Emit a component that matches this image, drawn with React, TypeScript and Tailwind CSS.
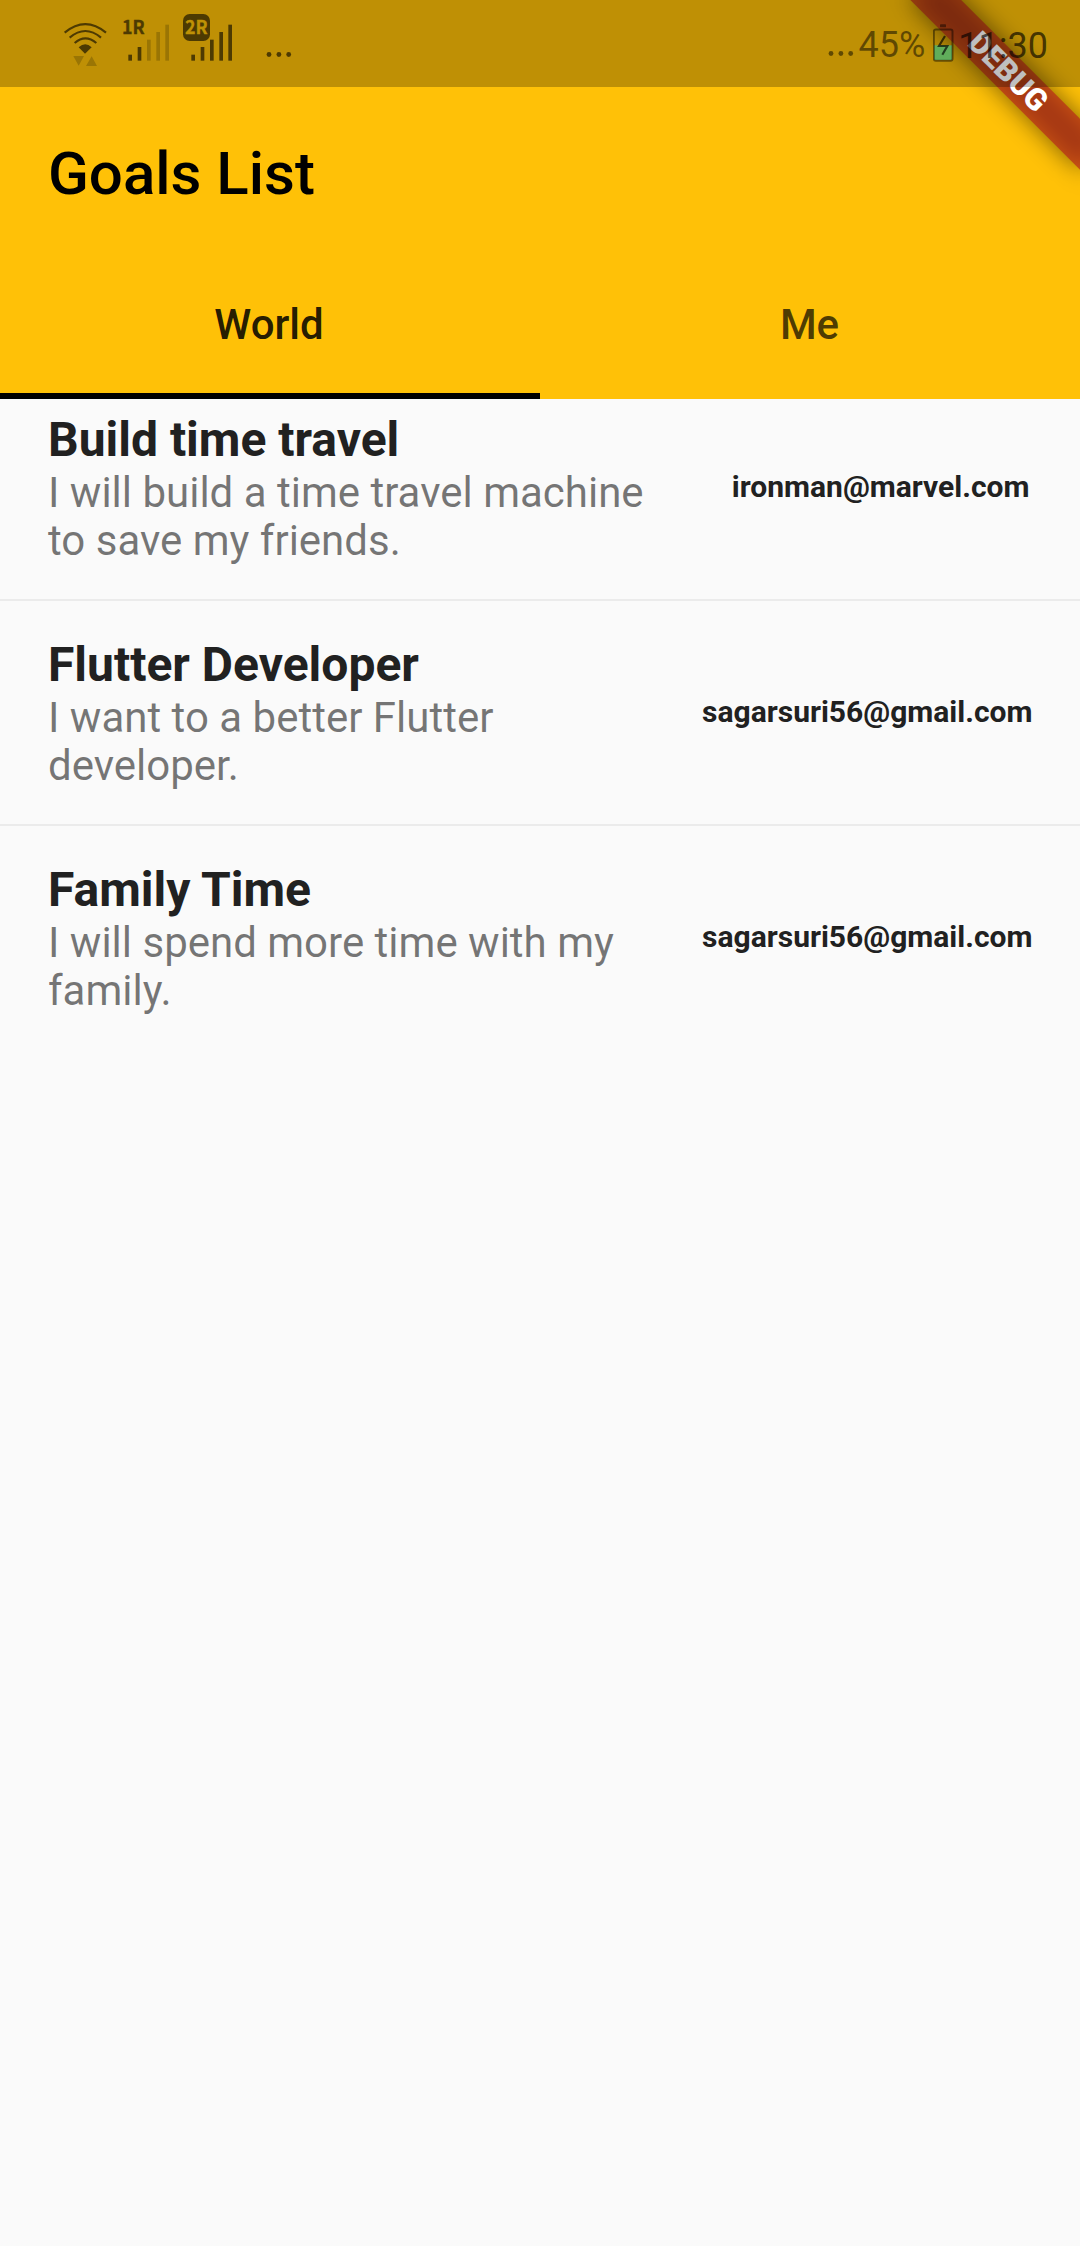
const goals = [
  { title: 'Build time travel', text: 'I will build a time travel machine to save my friends.', email: 'ironman@marvel.com' },
  { title: 'Flutter Developer', text: 'I want to a better Flutter developer.', email: 'sagarsuri56@gmail.com' },
  { title: 'Family Time', text: 'I will spend more time with my family.', email: 'sagarsuri56@gmail.com' },
];

function Wifi() {
  return (
    <svg className="h-[47px] w-[45px]" viewBox="40 60 135 141" fill="none" stroke="#4d3a02" strokeWidth="6.5">
      <path d="M45 98Q107 47 169 98M60 113Q107 73 154 113M75 129Q107 101 140 129" />
      <path d="M87 142Q107 124 126 142L106 161Z" fill="#4d3a02" stroke="none" />
      <path d="M71 168H103L87 197ZM109 198H142L126 169Z" fill="#9a7504" stroke="none" />
    </svg>
  );
}

const bars = [
  { x: 0, y: 165 },
  { x: 28, y: 142 },
  { x: 56, y: 120 },
  { x: 84, y: 97 },
  { x: 111, y: 75 },
];

function Signal({ label, level, boxed }: { label: string; level: number; boxed?: boolean }) {
  const ink = boxed ? '#bf9105' : '#4d3a02';
  return (
    <svg className="h-[47px] w-[50px]" viewBox="0 43 150 141">
      {boxed && <rect x="0" y="43" width="81" height="81" rx="20" fill="#4d3a02" />}
      {bars.map((b, i) => (
        <rect key={b.x} x={b.x + 25} y={b.y} width="11" height={183 - b.y} fill={i < level ? '#4d3a02' : '#9a7504'} />
      ))}
      <text x="6" y="102" fontSize="55" fontWeight="700" textLength="68" lengthAdjust="spacingAndGlyphs" fill={ink} stroke={ink} strokeWidth="1" className="font-['Noto_Sans_CJK_SC',sans-serif]">
        {label}
      </text>
    </svg>
  );
}

function Dots({ color }: { color: string }) {
  return (
    <svg className="h-[5px] w-[26px]" viewBox="0 0 26 5" fill={color}>
      <circle cx="3" cy="2.5" r="2.4" />
      <circle cx="12.9" cy="2.5" r="2.4" />
      <circle cx="22.7" cy="2.5" r="2.4" />
    </svg>
  );
}

function Battery() {
  return (
    <svg className="h-[38px] w-[21px]" viewBox="369 71 63 114">
      <rect x="390" y="72" width="18" height="9" rx="2" fill="#000" fillOpacity=".45" />
      <rect x="372" y="135" width="54" height="44" fill="#60ad5b" />
      <rect x="371.5" y="87.5" width="56" height="94" rx="6" fill="none" stroke="#000" strokeOpacity=".45" strokeWidth="6" />
      <path d="M405 107L387 137H412L397 163" fill="none" stroke="#000" strokeOpacity=".65" strokeWidth="6.5" />
    </svg>
  );
}

function DebugBanner() {
  return (
    <div className="pointer-events-none absolute inset-0 overflow-hidden">
      <div className="absolute top-0 left-full h-0 w-0 rotate-45">
        <div className="absolute top-[84px] -left-[120px] h-[36px] w-[240px] bg-black/50 blur-[12px]" />
        <div className="absolute top-[84px] -left-[120px] flex h-[36px] w-[240px] items-center justify-center bg-[#b71c1c]/63 text-[30.6px] leading-none font-black text-white">
          DEBUG
        </div>
      </div>
    </div>
  );
}

function StatusBar() {
  return (
    <div className="absolute inset-x-0 top-0 flex h-[87px] items-start bg-black/25 pr-[32px] pl-[63px] text-[36px] leading-[42px]">
      <div className="mt-[20px] flex"><Wifi /></div>
      <div className="mt-[14px] ml-[12px] flex gap-[13px]">
        <Signal label="1R" level={2} />
        <Signal label="2R" level={5} boxed />
      </div>
      <div className="mt-[52px] ml-[33px] flex"><Dots color="#4d3a02" /></div>
      <div className="mt-[51px] ml-auto flex"><Dots color="#604902" /></div>
      <span className="mt-[24px] ml-[5px] text-black/50">45%</span>
      <div className="mt-[24px] ml-[8px] flex"><Battery /></div>
      <span className="mt-[25px] ml-[4px] text-black/65">11:30</span>
    </div>
  );
}

export default function App() {
  return (
    <div className="relative h-[2246px] w-[1080px] overflow-hidden bg-[#fafafa] font-[Roboto,sans-serif]">
      <header className="flex h-[399px] flex-col bg-[#ffc107] pt-[87px]">
        <h1 className="flex h-[168px] items-center pt-[5px] pl-[48px] text-[60px] leading-[70px] font-medium text-black">Goals List</h1>
        <nav className="grid h-[144px] grid-cols-2 text-[42px] leading-[49px] font-medium">
          <div className="flex items-center justify-center border-b-[6px] border-black pt-[1px] pr-[2px] text-black/87">World</div>
          <div className="flex items-center justify-center border-b-[6px] border-transparent pt-[1px] pr-[1px] text-black/70">Me</div>
        </nav>
      </header>
      <main>
        {goals.map((g, i) => (
          <section key={g.title} className={`flex justify-between pb-[34px] pl-[48px] text-[#212121] ${i === 0 ? 'pt-[13px]' : 'pt-[36px]'} ${i < 2 ? 'border-b-2 border-[#ebebeb]' : ''}`}>
            <div className="w-[606px]">
              <h2 className="mb-px text-[48px] leading-[56px] font-bold">{g.title}</h2>
              <p className="text-[42px] leading-[48px] text-black/54">{g.text}</p>
            </div>
            <span className={`mt-[57px] text-[30px] leading-[35px] font-bold ${i === 0 ? 'mr-[50.5px]' : 'mr-[47.5px]'}`}>{g.email}</span>
          </section>
        ))}
      </main>
      <DebugBanner />
      <StatusBar />
    </div>
  );
}
